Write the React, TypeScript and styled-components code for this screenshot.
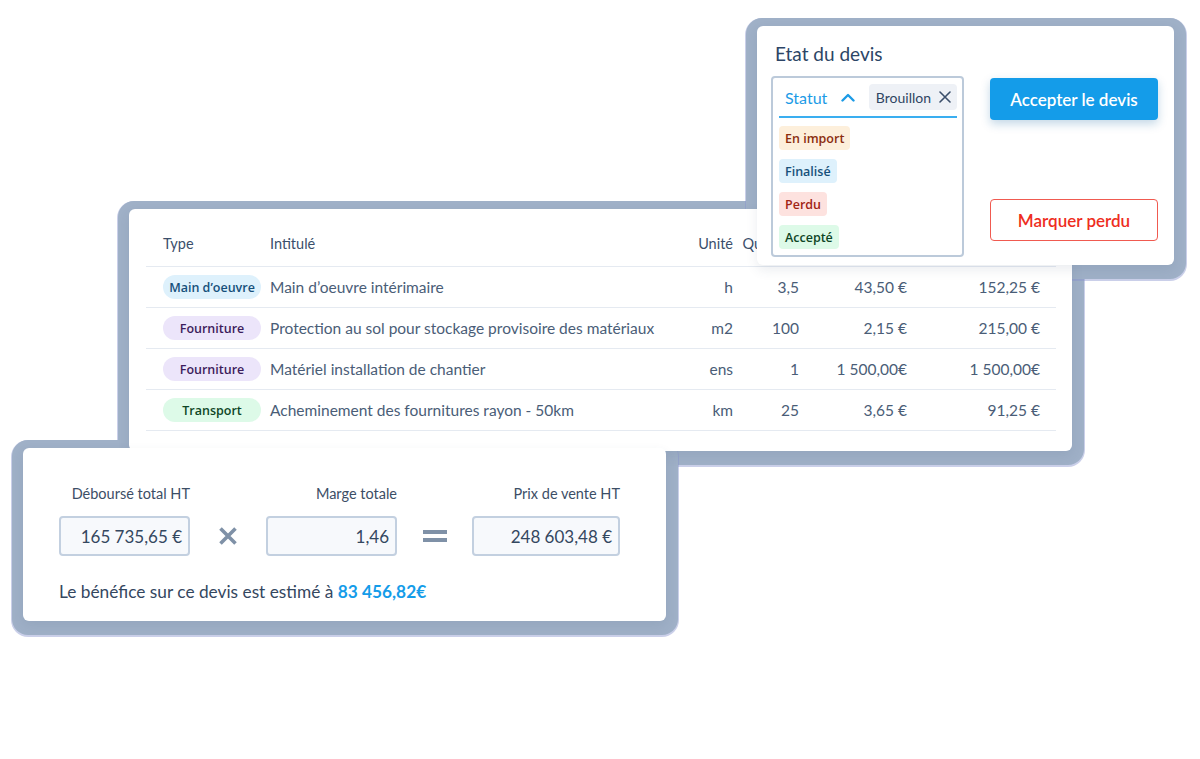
import React from 'react';
import styled, { createGlobalStyle } from 'styled-components';

const GlobalStyle = createGlobalStyle`
  html, body {
    margin: 0;
    padding: 0;
    background: #ffffff;
  }
  body {
    font-family: Lato, 'Liberation Sans', sans-serif;
    -webkit-font-smoothing: antialiased;
  }
`;

const FRAME = '#9fb0c7';

const Canvas = styled.div`
  position: relative;
  isolation: isolate;
  width: 1200px;
  height: 759px;
  overflow: hidden;
  background: #ffffff;
`;

// floating windows; their frames all sit one layer below every white surface
const Window = styled.div<{ $left: number; $top: number; $width: number; $height: number }>`
  position: absolute;
  left: ${(p) => p.$left}px;
  top: ${(p) => p.$top}px;
  width: ${(p) => p.$width}px;
  height: ${(p) => p.$height}px;
  box-sizing: border-box;
  background: #ffffff;
  border-radius: 6px;
  box-shadow: 0 5px 12px rgba(60, 80, 110, 0.1);

  &::before {
    content: '';
    position: absolute;
    inset: -8px -12px -14px -11px;
    border-radius: 16px;
    background: ${FRAME};
    box-shadow: 0 1px 0 1px rgba(138, 148, 206, 0.45);
    z-index: -1;
  }
`;

/* ---------- table ---------- */

const TableWrap = styled.div`
  padding: 0 16px 0 17px;
`;

const Row = styled.div<{ $head?: boolean }>`
  display: grid;
  grid-template-columns: 124px 1fr 60px 66px 108px 133px;
  padding-right: 16px;
  align-items: center;
  height: ${(p) => (p.$head ? '58px' : '41px')};
  box-sizing: border-box;
  border-bottom: 1px solid #e5eaf1;
  ${(p) => (p.$head ? 'align-items: end; padding-bottom: 14px;' : '')}
`;

const HeadCell = styled.div<{ $right?: boolean }>`
  font-size: 14.5px;
  line-height: 16px;
  color: #3b4f6b;
  text-align: ${(p) => (p.$right ? 'right' : 'left')};
  white-space: nowrap;
`;

const Cell = styled.div<{ $right?: boolean }>`
  font-size: 15.5px;
  color: #4a5d77;
  text-align: ${(p) => (p.$right ? 'right' : 'left')};
  white-space: nowrap;
`;

const TypeCell = styled.div`
  padding-left: 17px;
`;

const tones = {
  blue: { bg: '#def1fc', fg: '#16507b' },
  purple: { bg: '#ece5fa', fg: '#3d1c5c' },
  green: { bg: '#ddfae8', fg: '#0e4626' },
  orange: { bg: '#fdefdb', fg: '#8b2d0e' },
  red: { bg: '#fde2df', fg: '#a12415' },
};

type Tone = keyof typeof tones;

const TypePill = styled.span<{ $tone: Tone }>`
  display: inline-flex;
  align-items: center;
  justify-content: center;
  width: 98px;
  height: 24px;
  border-radius: 12px;
  background: ${(p) => tones[p.$tone].bg};
  color: ${(p) => tones[p.$tone].fg};
  font-family: 'Open Sans', 'Noto Sans', sans-serif;
  font-weight: 600;
  font-size: 12.5px;
`;

/* ---------- status card ---------- */

const StatusBody = styled.div`
  display: flex;
  flex-direction: column;
  padding: 16px 16px 8px 14px;
  height: 100%;
  box-sizing: border-box;
`;

const Title = styled.h2`
  margin: 0 0 10px 4px;
  font-size: 19px;
  line-height: 24px;
  font-weight: 400;
  color: #2c4566;
`;

const StatusRow = styled.div`
  display: flex;
  gap: 26px;
  flex: 1;
`;

const Dropdown = styled.div`
  width: 193px;
  box-sizing: border-box;
  border: 2px solid #bccada;
  border-radius: 4px;
  padding: 0 5px 6px 6px;
`;

const DropHead = styled.div`
  display: flex;
  align-items: center;
  height: 38px;
  border-bottom: 2px solid #3aaef0;
  padding-left: 6px;
`;

const DropLabel = styled.span`
  font-size: 16px;
  color: #1c9be6;
`;

const Chevron = styled.svg`
  margin-left: 14px;
`;

const Chip = styled.span`
  margin-left: auto;
  display: inline-flex;
  align-items: center;
  gap: 8px;
  height: 26px;
  padding: 0 6px 0 7px;
  border-radius: 4px;
  background: #eef1f6;
  color: #2f4563;
  font-size: 14px;
`;

const Options = styled.div`
  display: flex;
  flex-direction: column;
  align-items: flex-start;
  gap: 9px;
  padding-top: 8px;
`;

const StatusTag = styled.span<{ $tone: Tone }>`
  display: inline-flex;
  align-items: center;
  height: 24px;
  padding: 0 6px;
  border-radius: 4px;
  background: ${(p) => tones[p.$tone].bg};
  color: ${(p) => tones[p.$tone].fg};
  font-family: 'Open Sans', 'Noto Sans', sans-serif;
  font-weight: 600;
  font-size: 12.5px;
`;

const Actions = styled.div`
  display: flex;
  flex-direction: column;
  justify-content: space-between;
  width: 168px;
  margin: 2px 0 16px;
`;

const Button = styled.button<{ $variant: 'primary' | 'danger' }>`
  height: 42px;
  border-radius: 4px;
  font-family: Lato, 'Liberation Sans', sans-serif;
  font-size: 17px;
  font-weight: 600;
  cursor: pointer;
  ${(p) =>
    p.$variant === 'primary'
      ? `background: #149ce9; color: #fff; border: none; box-shadow: 0 4px 10px rgba(20, 100, 160, 0.25);`
      : `background: #fff; color: #ee2d21; border: 1.5px solid #f05a50;`}
`;

/* ---------- totals card ---------- */

const TotalsBody = styled.div`
  padding: 38px 46px 0 36px;
`;

const Formula = styled.div`
  display: grid;
  grid-template-columns: 131px 76px 131px 75px 148px;
  grid-template-rows: auto auto;
  row-gap: 14px;
  align-items: center;
`;

const FieldLabel = styled.div<{ $col: number }>`
  grid-column: ${(p) => p.$col};
  grid-row: 1;
  text-align: right;
  font-size: 14.5px;
  line-height: 16px;
  color: #3c4e66;
  white-space: nowrap;
`;

const Field = styled.div<{ $col: number }>`
  grid-column: ${(p) => p.$col};
  grid-row: 2;
  height: 40px;
  box-sizing: border-box;
  border: 2px solid #c3d0e0;
  border-radius: 4px;
  background: #f7f9fc;
  display: flex;
  align-items: center;
  justify-content: flex-end;
  padding-right: 6px;
  font-size: 17px;
  color: #34475f;
`;

const Operator = styled.div<{ $col: number }>`
  grid-column: ${(p) => p.$col};
  grid-row: 2;
  display: flex;
  justify-content: center;
`;

const Summary = styled.p`
  margin: 27px 0 0;
  font-size: 17.3px;
  line-height: 17px;
  color: #34475f;
`;

const Amount = styled.strong`
  color: #149ce9;
  font-weight: 700;
`;

const rows: { type: string; tone: Tone; label: string; unit: string; qty: string; pu: string; total: string }[] = [
  { type: 'Main d’oeuvre', tone: 'blue', label: 'Main d’oeuvre intérimaire', unit: 'h', qty: '3,5', pu: '43,50 €', total: '152,25 €' },
  { type: 'Fourniture', tone: 'purple', label: 'Protection au sol pour stockage provisoire des matériaux', unit: 'm2', qty: '100', pu: '2,15 €', total: '215,00 €' },
  { type: 'Fourniture', tone: 'purple', label: 'Matériel installation de chantier', unit: 'ens', qty: '1', pu: '1 500,00€', total: '1 500,00€' },
  { type: 'Transport', tone: 'green', label: 'Acheminement des fournitures rayon - 50km', unit: 'km', qty: '25', pu: '3,65 €', total: '91,25 €' },
];

export default function App() {
  return (
    <>
      <GlobalStyle />
      <Canvas>
        <Window $left={129} $top={209} $width={943} $height={242}>
          <TableWrap>
            <Row $head>
              <TypeCell>
                <HeadCell>Type</HeadCell>
              </TypeCell>
              <HeadCell>Intitulé</HeadCell>
              <HeadCell $right>Unité</HeadCell>
              <HeadCell $right>Quantité</HeadCell>
              <HeadCell $right>P.U. HT</HeadCell>
              <HeadCell $right>Total HT</HeadCell>
            </Row>
            {rows.map((r, i) => (
              <Row key={i}>
                <TypeCell>
                  <TypePill $tone={r.tone}>{r.type}</TypePill>
                </TypeCell>
                <Cell>{r.label}</Cell>
                <Cell $right>{r.unit}</Cell>
                <Cell $right>{r.qty}</Cell>
                <Cell $right>{r.pu}</Cell>
                <Cell $right>{r.total}</Cell>
              </Row>
            ))}
          </TableWrap>
        </Window>

        <Window $left={757} $top={26} $width={417} $height={239}>
          <StatusBody>
            <Title>Etat du devis</Title>
            <StatusRow>
              <Dropdown>
                <DropHead>
                  <DropLabel>Statut</DropLabel>
                  <Chevron width="14" height="9" viewBox="0 0 14 9">
                    <path d="M1.5 7.5 L7 2 L12.5 7.5" fill="none" stroke="#1c9be6" strokeWidth="2.4" strokeLinecap="round" strokeLinejoin="round" />
                  </Chevron>
                  <Chip>
                    Brouillon
                    <svg width="12" height="12" viewBox="0 0 12 12">
                      <path d="M1 1 L11 11 M11 1 L1 11" stroke="#3b4f6b" strokeWidth="1.6" strokeLinecap="round" />
                    </svg>
                  </Chip>
                </DropHead>
                <Options>
                  <StatusTag $tone="orange">En import</StatusTag>
                  <StatusTag $tone="blue">Finalisé</StatusTag>
                  <StatusTag $tone="red">Perdu</StatusTag>
                  <StatusTag $tone="green">Accepté</StatusTag>
                </Options>
              </Dropdown>
              <Actions>
                <Button $variant="primary">Accepter le devis</Button>
                <Button $variant="danger">Marquer perdu</Button>
              </Actions>
            </StatusRow>
          </StatusBody>
        </Window>

        <Window $left={23} $top={448} $width={643} $height={173}>
          <TotalsBody>
            <Formula>
              <FieldLabel $col={1}>Déboursé total HT</FieldLabel>
              <FieldLabel $col={3}>Marge totale</FieldLabel>
              <FieldLabel $col={5}>Prix de vente HT</FieldLabel>
              <Field $col={1}>165 735,65 €</Field>
              <Operator $col={2}>
                <svg width="20" height="20" viewBox="0 0 20 20">
                  <path d="M2.5 2.5 L17.5 17.5 M17.5 2.5 L2.5 17.5" stroke="#7f91a7" strokeWidth="3.6" strokeLinecap="butt" />
                </svg>
              </Operator>
              <Field $col={3}>1,46</Field>
              <Operator $col={4}>
                <svg width="24" height="16" viewBox="0 0 24 16">
                  <rect x="0" y="2" width="24" height="4" fill="#7f91a7" />
                  <rect x="0" y="10" width="24" height="4" fill="#7f91a7" />
                </svg>
              </Operator>
              <Field $col={5}>248 603,48 €</Field>
            </Formula>
            <Summary>
              Le bénéfice sur ce devis est estimé à <Amount>83 456,82€</Amount>
            </Summary>
          </TotalsBody>
        </Window>
      </Canvas>
    </>
  );
}
